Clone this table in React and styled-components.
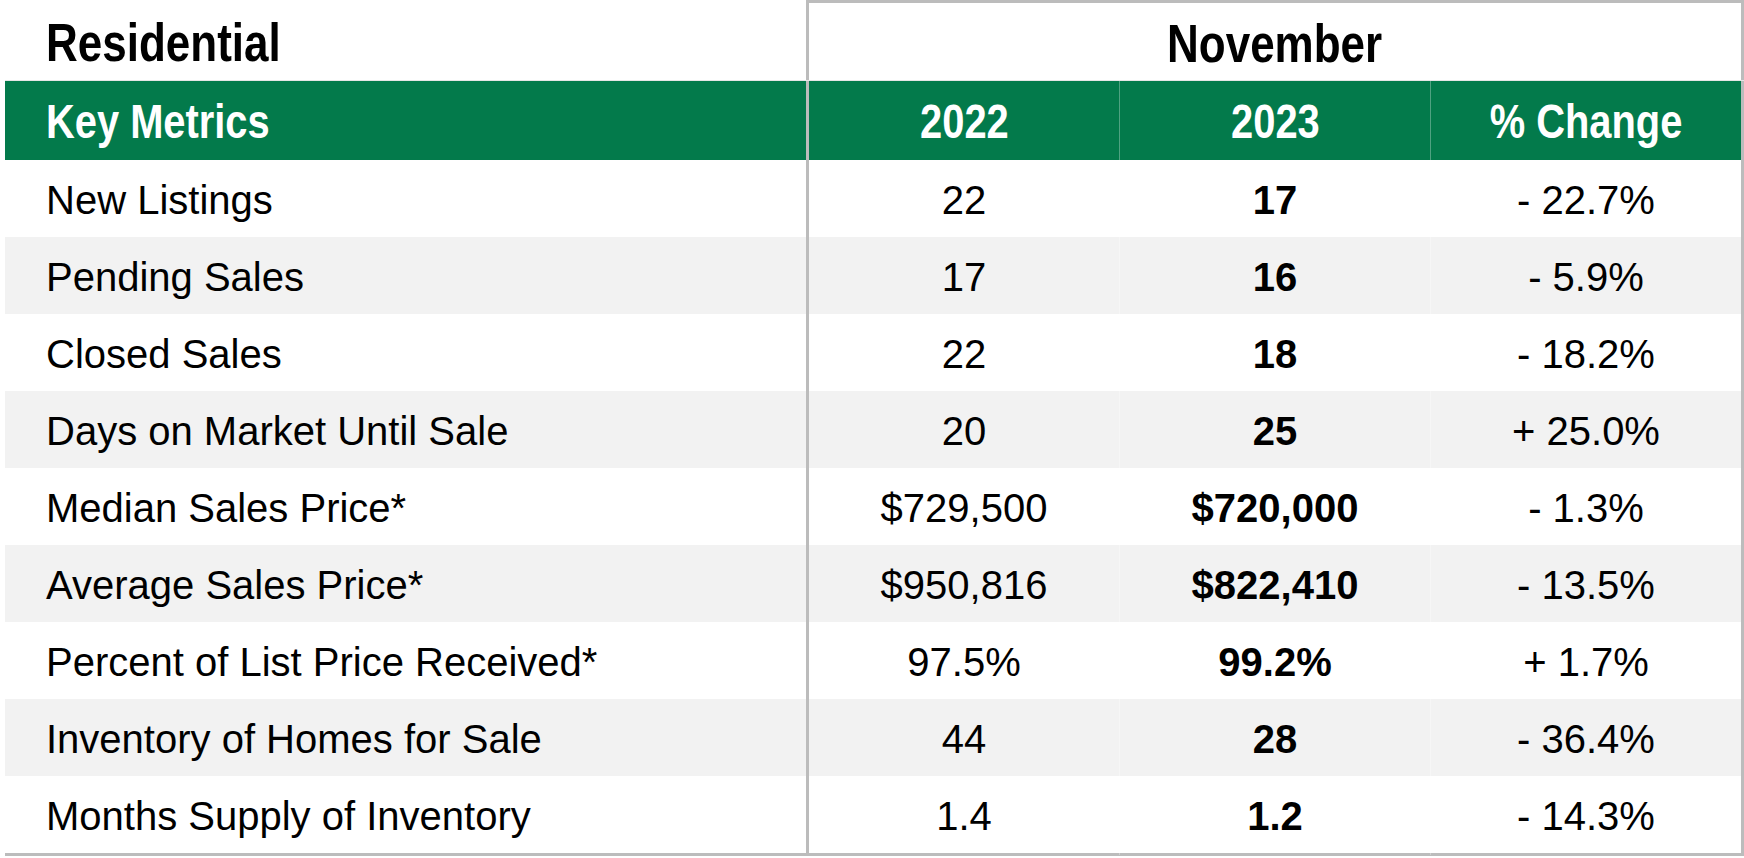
import React from "react";
import styled, { createGlobalStyle } from "styled-components";

const GlobalStyle = createGlobalStyle`
  html, body {
    margin: 0;
    padding: 0;
    background: #ffffff;
  }
  body {
    font-family: "Liberation Sans", Arial, sans-serif;
    color: #000;
  }
`;

const GREEN = "#037a4b";
const RULE = "#bcbcbc";
const COLS = "801px 313px 311px 314px";

const rows = [
  ["New Listings", "22", "17", "- 22.7%"],
  ["Pending Sales", "17", "16", "- 5.9%"],
  ["Closed Sales", "22", "18", "- 18.2%"],
  ["Days on Market Until Sale", "20", "25", "+ 25.0%"],
  ["Median Sales Price*", "$729,500", "$720,000", "- 1.3%"],
  ["Average Sales Price*", "$950,816", "$822,410", "- 13.5%"],
  ["Percent of List Price Received*", "97.5%", "99.2%", "+ 1.7%"],
  ["Inventory of Homes for Sale", "44", "28", "- 36.4%"],
  ["Months Supply of Inventory", "1.4", "1.2", "- 14.3%"],
];

function App() {
  return (
    <>
      <GlobalStyle />
      <Table>
        <TitleRow>
          <Title>
            <Condensed $origin="left">Residential</Condensed>
          </Title>
          <PeriodHead>
            <Condensed>November</Condensed>
          </PeriodHead>
        </TitleRow>
        <HeadRow>
          <HeadCell $align="left">
            <Condensed $origin="left">Key Metrics</Condensed>
          </HeadCell>
          <HeadCell $first>
            <Condensed>2022</Condensed>
          </HeadCell>
          <HeadCell>
            <Condensed>2023</Condensed>
          </HeadCell>
          <HeadCell $last>
            <Condensed>% Change</Condensed>
          </HeadCell>
        </HeadRow>
        {rows.map((r, i) => (
          <BodyRow key={r[0]} $shaded={i % 2 === 1}>
            <Label>{r[0]}</Label>
            <Value $first>{r[1]}</Value>
            <Value $bold>{r[2]}</Value>
            <Value $last>{r[3]}</Value>
          </BodyRow>
        ))}
      </Table>
    </>
  );
}

const Table = styled.div`
  margin-left: 5px;
  width: 1739px;
  display: flex;
  flex-direction: column;
  border-bottom: 3px solid ${RULE};
`;

// no condensed face is installed, so squeeze the bold heading type
const Condensed = styled.span`
  display: inline-block;
  transform: scaleX(0.83);
  transform-origin: ${(p) => p.$origin || "center"};
`;

const TitleRow = styled.div`
  display: grid;
  grid-template-columns: 801px 1fr;
  height: 80px;
`;

const Title = styled.div`
  font-weight: 700;
  font-size: 53px;
  line-height: 80px;
  padding: 3px 0 0 41px;
  white-space: nowrap;
`;

const PeriodHead = styled.div`
  box-sizing: border-box;
  border: 3px solid ${RULE};
  border-bottom: none;
  font-weight: 700;
  font-size: 53px;
  line-height: 77px;
  padding-top: 2px;
  text-align: center;
`;

const HeadRow = styled.div`
  display: grid;
  grid-template-columns: ${COLS};
  height: 80px;
  background: ${GREEN};
  border-top: 1px solid #e6e6e6;
  box-sizing: border-box;
`;

const Cell = styled.div`
  box-sizing: border-box;
  text-align: ${(p) => p.$align || "center"};
  border-left: ${(p) =>
    p.$first ? `3px solid ${RULE}` : "1px solid rgba(255,255,255,0.3)"};
  border-right: ${(p) => (p.$last ? `3px solid ${RULE}` : "none")};
  white-space: nowrap;
`;

const HeadCell = styled(Cell)`
  color: #ffffff;
  font-weight: 700;
  font-size: 48px;
  line-height: 79px;
  padding-top: 1px;
  ${(p) => p.$align === "left" && "padding-left: 41px; border-left: none;"}
`;

const BodyRow = styled.div`
  display: grid;
  grid-template-columns: ${COLS};
  height: 77px;
  background: ${(p) => (p.$shaded ? "#f2f2f2" : "#ffffff")};
`;

const Label = styled.div`
  font-size: 40px;
  line-height: 77px;
  padding: 2px 0 0 41px;
  white-space: nowrap;
`;

const Value = styled(Cell)`
  font-size: 40px;
  font-weight: ${(p) => (p.$bold ? 700 : 400)};
  line-height: 77px;
  padding-top: 2px;
`;

export default App;
